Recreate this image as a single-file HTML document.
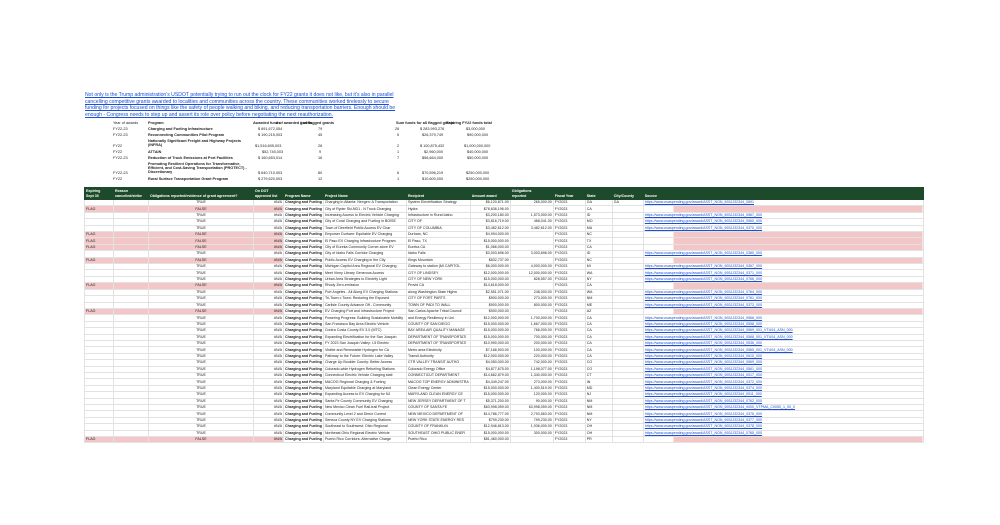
<!DOCTYPE html>
<html><head><meta charset="utf-8"><style>
body{margin:0;width:1000px;height:525px;background:#fff;font-family:"Liberation Sans",sans-serif;color:#222;position:relative;overflow:hidden}
.p{position:absolute;left:85px;top:92px;width:320px;font-size:5.1px;line-height:6.6px;color:#1a4fd6;text-decoration:underline}
.s{position:absolute;font-size:3.8px;white-space:nowrap}
.sb{font-weight:bold}
table{position:absolute;left:84px;top:187px;border-collapse:collapse;table-layout:fixed;font-size:3.6px}
td{padding:0 1px;height:5.42px;border:0.5px solid #e2e2e2;white-space:nowrap;overflow:hidden;line-height:5px}
tr.h td{background:#1e4a2c;color:#fff;font-weight:bold;height:11px;vertical-align:bottom;border-color:#1e4a2c}
.c{text-align:center}.r{text-align:right}.b{font-weight:bold}
.l{color:#1a4fd6;text-decoration:underline;overflow:visible}
tr.f td.k{background:#f3c7c7}
tr.f td.l{background:linear-gradient(90deg,transparent 30px,#f3c7c7 30px)}
.grid{position:absolute;left:80px;top:88px;width:835px;height:98px;background-image:linear-gradient(#eee 0.5px,transparent 0.5px);background-size:100% 6.5px}
</style></head><body>
<div class="p">Not only is the Trump administration's USDOT potentially trying to run out the clock for FY22 grants it does not like, but it's also in parallel cancelling competitive grants awarded to localities and communities across the country. These communities worked tirelessly to secure funding for projects focused on things like the safety of people walking and biking, and reducing transportation barriers. Enough should be enough - Congress needs to step up and assert its role over policy before negotiating the next reauthorization.</div>

<div class="s" style="left:113px;top:121px">Year of awards</div><div class="s sb" style="left:148px;top:121px">Program</div>
<div class="s sb" style="left:253px;top:121px">Awarded funds</div><div class="s sb" style="left:276px;top:121px"># of awarded grants</div><div class="s sb" style="left:300px;top:121px"># of flagged grants</div>
<div class="s sb" style="left:396px;top:121px">Sum funds for all flagged grants</div><div class="s sb" style="left:446px;top:121px">Expiring FY22 funds total</div>

<div class="s" style="left:113px;top:127px">FY22-23</div><div class="s sb" style="left:148px;top:127px">Charging and Fueling Infrastructure</div><div class="s" style="left:258px;top:127px">$ 691,672,054</div><div class="s" style="left:318px;top:127px">79</div><div class="s" style="left:395px;top:127px">26</div><div class="s" style="left:420px;top:127px">$ 283,993,276</div><div class="s" style="left:466px;top:127px">$3,000,000</div>
<div class="s" style="left:113px;top:133px">FY22-23</div><div class="s sb" style="left:148px;top:133px">Reconnecting Communities Pilot Program</div><div class="s" style="left:258px;top:133px">$ 190,215,003</div><div class="s" style="left:318px;top:133px">45</div><div class="s" style="left:397px;top:133px">5</div><div class="s" style="left:422px;top:133px">$26,379,749</div><div class="s" style="left:467px;top:133px">$90,000,000</div>
<div class="s sb" style="left:148px;top:139px;line-height:4.2px">Nationally Significant Freight and Highway Projects<br>(INFRA)</div>
<div class="s" style="left:113px;top:144px">FY22</div><div class="s" style="left:255px;top:144px">$1,516,605,003</div><div class="s" style="left:318px;top:144px">26</div><div class="s" style="left:397px;top:144px">2</div><div class="s" style="left:420px;top:144px">$ 100,875,432</div><div class="s" style="left:464px;top:144px">$1,000,000,000</div>
<div class="s" style="left:113px;top:150px">FY22</div><div class="s sb" style="left:148px;top:150px">ATTAIN</div><div class="s" style="left:262px;top:150px">$52,745,003</div><div class="s" style="left:319px;top:150px">9</div><div class="s" style="left:397px;top:150px">1</div><div class="s" style="left:424px;top:150px">$2,960,000</div><div class="s" style="left:467px;top:150px">$40,000,000</div>
<div class="s" style="left:113px;top:156px">FY22-23</div><div class="s sb" style="left:148px;top:156px">Reduction of Truck Emissions at Port Facilities</div><div class="s" style="left:258px;top:156px">$ 160,653,014</div><div class="s" style="left:318px;top:156px">16</div><div class="s" style="left:397px;top:156px">7</div><div class="s" style="left:422px;top:156px">$56,664,000</div><div class="s" style="left:467px;top:156px">$50,000,000</div>
<div class="s sb" style="left:148px;top:162px;line-height:4.2px">Promoting Resilient Operations for Transformative,<br>Efficient, and Cost-Saving Transportation (PROTECT) -<br>Discretionary</div>
<div class="s" style="left:113px;top:171px">FY22-23</div><div class="s" style="left:258px;top:171px">$ 640,710,003</div><div class="s" style="left:318px;top:171px">80</div><div class="s" style="left:397px;top:171px">6</div><div class="s" style="left:422px;top:171px">$70,596,219</div><div class="s" style="left:466px;top:171px">$250,000,000</div>
<div class="s" style="left:113px;top:177px">FY22</div><div class="s sb" style="left:148px;top:177px">Rural Surface Transportation Grant Program</div><div class="s" style="left:258px;top:177px">$ 279,520,003</div><div class="s" style="left:318px;top:177px">12</div><div class="s" style="left:397px;top:177px">1</div><div class="s" style="left:422px;top:177px">$10,600,000</div><div class="s" style="left:466px;top:177px">$250,000,000</div>

<table>
<colgroup><col style="width:29px"><col style="width:35px"><col style="width:105px"><col style="width:30px"><col style="width:39px"><col style="width:83px"><col style="width:57px"><col style="width:40px"><col style="width:43px"><col style="width:32px"><col style="width:27px"><col style="width:31px"><col style="width:280px"></colgroup>
<tr class="h"><td>Expiring<br>Sept 30</td><td>Reason<br>cancelled/strike</td><td>Obligations reported/evidence of grant agreement?</td><td>On DOT<br>approved list</td><td>Program Name</td><td>Project Name</td><td>Recipient</td><td>Amount award</td><td>Obligations<br>reported</td><td>Fiscal Year</td><td>State</td><td>City/County</td><td>Source</td></tr>
<tr><td class="k"></td><td class="k"></td><td class="k c">TRUE</td><td class="k r">#N/A</td><td class="b">Charging and Fueling</td><td>Charging in Atlanta: Nexgen: A Transportation</td><td>System Electrification Strategy</td><td class="r">$6,120,871.00</td><td class="r">265,000.00</td><td>FY2023</td><td>GA</td><td>GA</td><td class="l">https://www.usaspending.gov/award/ASST_NON_693JJ32344_0691</td></tr>
<tr class="f"><td class="k">FLAG</td><td class="k"></td><td class="k c">FALSE</td><td class="k r">#N/A</td><td class="b">Charging and Fueling</td><td>City of Ryder Ski-ND1 - N Truck Charging</td><td>Hydra</td><td class="r">$78,636,196.00</td><td class="r"></td><td>FY2023</td><td>CA</td><td></td><td class="l"></td></tr>
<tr><td class="k"></td><td class="k"></td><td class="k c">TRUE</td><td class="k r">#N/A</td><td class="b">Charging and Fueling</td><td>Increasing Access to Electric Vehicle Charging</td><td>Infrastructure in Rural Idaho</td><td class="r">$3,200,180.00</td><td class="r">1,573,000.00</td><td>FY2023</td><td>ID</td><td></td><td class="l">https://www.usaspending.gov/award/ASST_NON_693JJ32344_0567_000</td></tr>
<tr><td class="k"></td><td class="k"></td><td class="k c">TRUE</td><td class="k r">#N/A</td><td class="b">Charging and Fueling</td><td>City of Coral Charging and Fueling in BOISE</td><td>CITY OF</td><td class="r">$3,816,719.00</td><td class="r">468,041.00</td><td>FY2023</td><td>MO</td><td></td><td class="l">https://www.usaspending.gov/award/ASST_NON_693JJ32344_0560_000</td></tr>
<tr><td class="k"></td><td class="k"></td><td class="k c">TRUE</td><td class="k r">#N/A</td><td class="b">Charging and Fueling</td><td>Town of Deerfield Public Access EV Char</td><td>CITY OF COLUMBIA</td><td class="r">$3,482,612.00</td><td class="r">3,482,612.00</td><td>FY2023</td><td>MA</td><td></td><td class="l">https://www.usaspending.gov/award/ASST_NON_693JJ32344_0370_000</td></tr>
<tr class="f"><td class="k">FLAG</td><td class="k"></td><td class="k c">FALSE</td><td class="k r">#N/A</td><td class="b">Charging and Fueling</td><td>Empower Durham: Equitable EV Charging</td><td>Durham, NC</td><td class="r">$4,994,000.00</td><td class="r"></td><td>FY2023</td><td>NC</td><td></td><td class="l"></td></tr>
<tr class="f"><td class="k">FLAG</td><td class="k"></td><td class="k c">FALSE</td><td class="k r">#N/A</td><td class="b">Charging and Fueling</td><td>El Paso EV Charging Infrastructure Program</td><td>El Paso, TX</td><td class="r">$15,000,000.00</td><td class="r"></td><td>FY2023</td><td>TX</td><td></td><td class="l"></td></tr>
<tr class="f"><td class="k">FLAG</td><td class="k"></td><td class="k c">FALSE</td><td class="k r">#N/A</td><td class="b">Charging and Fueling</td><td>City of Eureka Community Corner-store EV</td><td>Eureka CA</td><td class="r">$1,066,000.00</td><td class="r"></td><td>FY2023</td><td>CA</td><td></td><td class="l"></td></tr>
<tr><td class="k"></td><td class="k"></td><td class="k c">TRUE</td><td class="k r">#N/A</td><td class="b">Charging and Fueling</td><td>City of Idaho Falls Corridor Charging</td><td>Idaho Falls</td><td class="r">$3,003,696.00</td><td class="r">3,003,696.00</td><td>FY2023</td><td>ID</td><td></td><td class="l">https://www.usaspending.gov/award/ASST_NON_693JJ32344_0380_000</td></tr>
<tr class="f"><td class="k">FLAG</td><td class="k"></td><td class="k c">FALSE</td><td class="k r">#N/A</td><td class="b">Charging and Fueling</td><td>Public Access EV Charging in the City</td><td>Kings Mountain</td><td class="r">$832,737.00</td><td class="r"></td><td>FY2023</td><td>NC</td><td></td><td class="l"></td></tr>
<tr><td class="k"></td><td class="k"></td><td class="k c">TRUE</td><td class="k r">#N/A</td><td class="b">Charging and Fueling</td><td>Michigan Capitol Area Regional EV Charging</td><td>Gateway to station (MI CAPITOL</td><td class="r">$6,000,000.00</td><td class="r">4,000,000.00</td><td>FY2023</td><td>MI</td><td></td><td class="l">https://www.usaspending.gov/award/ASST_NON_693JJ32344_0367_000</td></tr>
<tr><td class="k"></td><td class="k"></td><td class="k c">TRUE</td><td class="k r">#N/A</td><td class="b">Charging and Fueling</td><td>Meet Vinny Library Generous Access</td><td>CITY OF LINDSEY</td><td class="r">$12,000,000.00</td><td class="r">12,000,000.00</td><td>FY2023</td><td>WA</td><td></td><td class="l">https://www.usaspending.gov/award/ASST_NON_693JJ32344_0371_000</td></tr>
<tr><td class="k"></td><td class="k"></td><td class="k c">TRUE</td><td class="k r">#N/A</td><td class="b">Charging and Fueling</td><td>Urban Area Strategies to Electrify Light</td><td>CITY OF NEW YORK</td><td class="r">$15,000,000.00</td><td class="r">828,557.00</td><td>FY2023</td><td>NY</td><td></td><td class="l">https://www.usaspending.gov/award/ASST_NON_693JJ32344_0766_000</td></tr>
<tr class="f"><td class="k">FLAG</td><td class="k"></td><td class="k c">FALSE</td><td class="k r">#N/A</td><td class="b">Charging and Fueling</td><td>Rhody Zero-emission</td><td>Provid CA</td><td class="r">$14,618,000.00</td><td class="r"></td><td>FY2023</td><td>CA</td><td></td><td class="l"></td></tr>
<tr><td class="k"></td><td class="k"></td><td class="k c">TRUE</td><td class="k r">#N/A</td><td class="b">Charging and Fueling</td><td>Port Angeles - All Along EV Charging Stations</td><td>along Washington State Highw</td><td class="r">$2,551,071.00</td><td class="r">248,000.00</td><td>FY2023</td><td>WA</td><td></td><td class="l">https://www.usaspending.gov/award/ASST_NON_693JJ32344_0764_000</td></tr>
<tr><td class="k"></td><td class="k"></td><td class="k c">TRUE</td><td class="k r">#N/A</td><td class="b">Charging and Fueling</td><td>Tri-Town c Town: Restoring the Exposed</td><td>CITY OF FORT PARTS</td><td class="r">$900,000.00</td><td class="r">273,000.00</td><td>FY2023</td><td>NM</td><td></td><td class="l">https://www.usaspending.gov/award/ASST_NON_693JJ32344_0761_000</td></tr>
<tr><td class="k"></td><td class="k"></td><td class="k c">TRUE</td><td class="k r">#N/A</td><td class="b">Charging and Fueling</td><td>Carlisle County Advance Off - Community</td><td>TOWN OF PADI TO WALL</td><td class="r">$900,000.00</td><td class="r">800,000.00</td><td>FY2023</td><td>ME</td><td></td><td class="l">https://www.usaspending.gov/award/ASST_NON_693JJ32344_0373_000</td></tr>
<tr class="f"><td class="k">FLAG</td><td class="k"></td><td class="k c">FALSE</td><td class="k r">#N/A</td><td class="b">Charging and Fueling</td><td>EV Charging Port and Infrastructure Project</td><td>San Carlos Apache Tribal Council</td><td class="r">$900,000.00</td><td class="r"></td><td>FY2023</td><td>AZ</td><td></td><td class="l"></td></tr>
<tr><td class="k"></td><td class="k"></td><td class="k c">TRUE</td><td class="k r">#N/A</td><td class="b">Charging and Fueling</td><td>Powering Progress: Building Sustainable Mobility</td><td>and Energy Resiliency in Uni</td><td class="r">$12,000,000.00</td><td class="r">1,700,000.00</td><td>FY2023</td><td>CA</td><td></td><td class="l">https://www.usaspending.gov/award/ASST_NON_693JJ32344_0566_000</td></tr>
<tr><td class="k"></td><td class="k"></td><td class="k c">TRUE</td><td class="k r">#N/A</td><td class="b">Charging and Fueling</td><td>San Francisco Bay Area Electric Vehicle</td><td>COUNTY OF SAN DIEGO</td><td class="r">$15,000,000.00</td><td class="r">1,667,000.00</td><td>FY2023</td><td>CA</td><td></td><td class="l">https://www.usaspending.gov/award/ASST_NON_693JJ32344_0558_000</td></tr>
<tr><td class="k"></td><td class="k"></td><td class="k c">TRUE</td><td class="k r">#N/A</td><td class="b">Charging and Fueling</td><td>Contra Costa County EV 3.0 (MTC)</td><td>BAY AREA AIR QUALITY MANAGE</td><td class="r">$15,000,000.00</td><td class="r">766,000.00</td><td>FY2023</td><td>CA</td><td></td><td class="l">https://www.usaspending.gov/award/ASST_NON_693JJ32344_0569_001_VTU04_ASN_000</td></tr>
<tr><td class="k"></td><td class="k"></td><td class="k c">TRUE</td><td class="k r">#N/A</td><td class="b">Charging and Fueling</td><td>Expanding Electrification for the San Joaquin</td><td>DEPARTMENT OF TRANSPORTATI</td><td class="r">$15,000,000.00</td><td class="r">700,000.00</td><td>FY2023</td><td>CA</td><td></td><td class="l">https://www.usaspending.gov/award/ASST_NON_693JJ32344_0568_001_VTU04_ASN_000</td></tr>
<tr><td class="k"></td><td class="k"></td><td class="k c">TRUE</td><td class="k r">#N/A</td><td class="b">Charging and Fueling</td><td>FY 2023 San Joaquin Valley: I-5 Electric</td><td>DEPARTMENT OF TRANSPORTATI</td><td class="r">$10,990,000.00</td><td class="r">200,000.00</td><td>FY2023</td><td>CA</td><td></td><td class="l">https://www.usaspending.gov/award/ASST_NON_693JJ32344_0536_000</td></tr>
<tr><td class="k"></td><td class="k"></td><td class="k c">TRUE</td><td class="k r">#N/A</td><td class="b">Charging and Fueling</td><td>Visible and Renewable Hydrogen for CA</td><td>Metro area Electricity</td><td class="r">$7,166,903.00</td><td class="r">100,000.00</td><td>FY2023</td><td>CA</td><td></td><td class="l">https://www.usaspending.gov/award/ASST_NON_693JJ32344_0565_001_VTU04_ASN_000</td></tr>
<tr><td class="k"></td><td class="k"></td><td class="k c">TRUE</td><td class="k r">#N/A</td><td class="b">Charging and Fueling</td><td>Pathway to the Future: Electric Lake Valley</td><td>Transit Authority</td><td class="r">$12,000,000.00</td><td class="r">220,000.00</td><td>FY2023</td><td>CA</td><td></td><td class="l">https://www.usaspending.gov/award/ASST_NON_693JJ32344_0610_000</td></tr>
<tr><td class="k"></td><td class="k"></td><td class="k c">TRUE</td><td class="k r">#N/A</td><td class="b">Charging and Fueling</td><td>Charge Up Boulder County: Better Access</td><td>CTR VALLEY TRANSIT AUTHO</td><td class="r">$4,050,000.00</td><td class="r">742,000.00</td><td>FY2023</td><td>CO</td><td></td><td class="l">https://www.usaspending.gov/award/ASST_NON_693JJ32344_0569_000</td></tr>
<tr><td class="k"></td><td class="k"></td><td class="k c">TRUE</td><td class="k r">#N/A</td><td class="b">Charging and Fueling</td><td>Colorado-wide Hydrogen Refueling Stations</td><td>Colorado Energy Office</td><td class="r">$4,877,675.00</td><td class="r">1,198,077.00</td><td>FY2023</td><td>CO</td><td></td><td class="l">https://www.usaspending.gov/award/ASST_NON_693JJ32344_0561_000</td></tr>
<tr><td class="k"></td><td class="k"></td><td class="k c">TRUE</td><td class="k r">#N/A</td><td class="b">Charging and Fueling</td><td>Connecticut Electric Vehicle Charging stati</td><td>CONNECTICUT DEPARTMENT</td><td class="r">$14,662,879.00</td><td class="r">1,340,000.00</td><td>FY2023</td><td>CT</td><td></td><td class="l">https://www.usaspending.gov/award/ASST_NON_693JJ32344_0017_000</td></tr>
<tr><td class="k"></td><td class="k"></td><td class="k c">TRUE</td><td class="k r">#N/A</td><td class="b">Charging and Fueling</td><td>MACOG Regional Charging &amp; Fueling</td><td>MACOG TOP ENERGY ADMINISTRA</td><td class="r">$4,349,247.00</td><td class="r">273,000.00</td><td>FY2023</td><td>IN</td><td></td><td class="l">https://www.usaspending.gov/award/ASST_NON_693JJ32344_0372_000</td></tr>
<tr><td class="k"></td><td class="k"></td><td class="k c">TRUE</td><td class="k r">#N/A</td><td class="b">Charging and Fueling</td><td>Maryland Equitable Charging at Maryland</td><td>Clean Energy Center</td><td class="r">$15,000,000.00</td><td class="r">1,400,519.00</td><td>FY2023</td><td>MD</td><td></td><td class="l">https://www.usaspending.gov/award/ASST_NON_693JJ32344_0374_000</td></tr>
<tr><td class="k"></td><td class="k"></td><td class="k c">TRUE</td><td class="k r">#N/A</td><td class="b">Charging and Fueling</td><td>Expanding Access to EV Charging for NJ</td><td>MARYLAND CLEAN ENERGY CE</td><td class="r">$15,000,000.00</td><td class="r">120,000.00</td><td>FY2023</td><td>NJ</td><td></td><td class="l">https://www.usaspending.gov/award/ASST_NON_693JJ32344_0011_000</td></tr>
<tr><td class="k"></td><td class="k"></td><td class="k c">TRUE</td><td class="k r">#N/A</td><td class="b">Charging and Fueling</td><td>Santa Fe County Community EV Charging</td><td>NEW JERSEY DEPARTMENT OF T</td><td class="r">$5,371,200.00</td><td class="r">90,000.00</td><td>FY2023</td><td>NM</td><td></td><td class="l">https://www.usaspending.gov/award/ASST_NON_693JJ32344_0762_000</td></tr>
<tr><td class="k"></td><td class="k"></td><td class="k c">TRUE</td><td class="k r">#N/A</td><td class="b">Charging and Fueling</td><td>New Mexico Clean Fuel Rail-trail Project</td><td>COUNTY OF SANTA FE</td><td class="r">$63,998,059.00</td><td class="r">63,998,059.00</td><td>FY2023</td><td>NM</td><td></td><td class="l">https://www.usaspending.gov/award/ASST_NON_693JJ32344_0000_VTPMA_C0050_1_00_0</td></tr>
<tr><td class="k"></td><td class="k"></td><td class="k c">TRUE</td><td class="k r">#N/A</td><td class="b">Charging and Fueling</td><td>Community Level 2 and Direct Current</td><td>NEW MEXICO DEPARTMENT OF</td><td class="r">$14,786,777.00</td><td class="r">2,793,563.00</td><td>FY2023</td><td>NM</td><td></td><td class="l">https://www.usaspending.gov/award/ASST_NON_693JJ32344_0376_000</td></tr>
<tr><td class="k"></td><td class="k"></td><td class="k c">TRUE</td><td class="k r">#N/A</td><td class="b">Charging and Fueling</td><td>Seneca County NY EV Charging Stations</td><td>NEW YORK STATE ENERGY RES</td><td class="r">$799,230.00</td><td class="r">799,230.00</td><td>FY2023</td><td>NY</td><td></td><td class="l">https://www.usaspending.gov/award/ASST_NON_693JJ32344_0377_000</td></tr>
<tr><td class="k"></td><td class="k"></td><td class="k c">TRUE</td><td class="k r">#N/A</td><td class="b">Charging and Fueling</td><td>Southeast to Southwest: Ohio Regional</td><td>COUNTY OF FRANKLIN</td><td class="r">$12,946,813.00</td><td class="r">1,936,000.00</td><td>FY2023</td><td>OH</td><td></td><td class="l">https://www.usaspending.gov/award/ASST_NON_693JJ32344_0378_000</td></tr>
<tr><td class="k"></td><td class="k"></td><td class="k c">TRUE</td><td class="k r">#N/A</td><td class="b">Charging and Fueling</td><td>Northeast Ohio Regional Electric Vehicle</td><td>SOUTHEAST OHIO PUBLIC ENER</td><td class="r">$15,000,000.00</td><td class="r">300,000.00</td><td>FY2023</td><td>OH</td><td></td><td class="l">https://www.usaspending.gov/award/ASST_NON_693JJ32344_0765_000</td></tr>
<tr class="f"><td class="k">FLAG</td><td class="k"></td><td class="k c">FALSE</td><td class="k r">#N/A</td><td class="b">Charging and Fueling</td><td>Puerto Rico Corridors: Alternative Charge</td><td>Puerto Rico</td><td class="r">$81,460,000.00</td><td class="r"></td><td>FY2023</td><td>PR</td><td></td><td class="l"></td></tr>
</table>
</body></html>
